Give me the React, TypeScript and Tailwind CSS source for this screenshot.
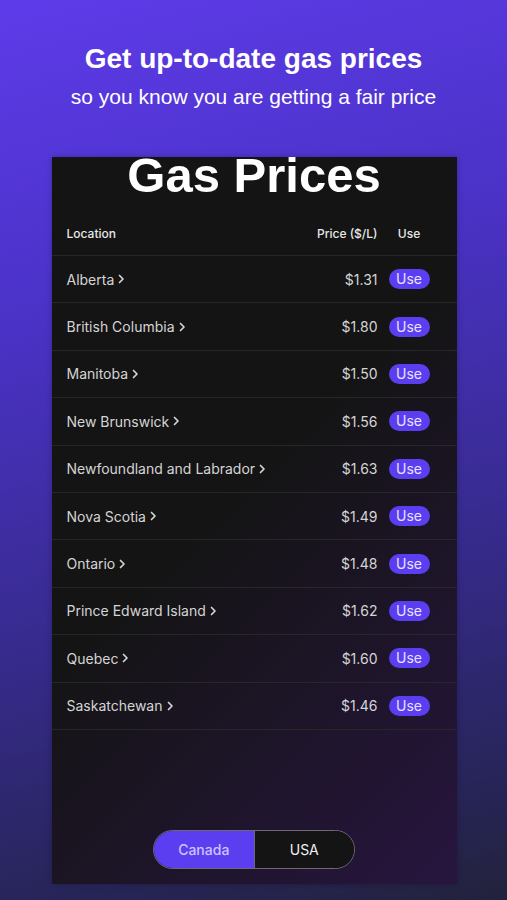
const rows = [
  { name: "Alberta", price: "$1.31" },
  { name: "British Columbia", price: "$1.80" },
  { name: "Manitoba", price: "$1.50" },
  { name: "New Brunswick", price: "$1.56" },
  { name: "Newfoundland and Labrador", price: "$1.63" },
  { name: "Nova Scotia", price: "$1.49" },
  { name: "Ontario", price: "$1.48" },
  { name: "Prince Edward Island", price: "$1.62" },
  { name: "Quebec", price: "$1.60" },
  { name: "Saskatchewan", price: "$1.46" },
];

function Chevron() {
  return (
    <svg width="7" height="10" viewBox="0 0 7 10" className="ml-[4px] inline-block" aria-hidden>
      <path d="M1.5 1.5 L5 5 L1.5 8.5" fill="none" stroke="currentColor" strokeWidth="1.7" strokeLinecap="round" strokeLinejoin="round" />
    </svg>
  );
}

function PriceRow({ name, price }: { name: string; price: string }) {
  return (
    <div className="grid h-[47.4px] grid-cols-[1fr_auto_41px] items-center gap-x-[11px] border-b border-[#272727] pl-[15px] pr-[27px] text-[14px] text-[#d4d4d4]">
      <span className="flex items-center">
        {name}
        <Chevron />
      </span>
      <span className="text-right">{price}</span>
      <span className="flex h-[20px] items-center justify-center rounded-full bg-[#5b3ef0] text-[14px] leading-none text-[#e6e2ff]">
        Use
      </span>
    </div>
  );
}

export default function App() {
  return (
    <div className="flex h-[900px] w-[507px] flex-col items-center overflow-hidden bg-[linear-gradient(165deg,#5e3be9_0%,#4a32c6_32%,#352a88_66%,#272558_88%,#22223c_100%)] font-['Liberation_Sans',Arial,sans-serif]">
      <h1 className="mt-[42px] text-[28px] font-bold leading-[34px] text-white">Get up-to-date gas prices</h1>
      <p className="mt-[8px] text-[21px] leading-[26px] text-white">so you know you are getting a fair price</p>

      <div className="mt-[47px] ml-[1px] flex h-[727px] w-[405px] flex-col overflow-hidden bg-[linear-gradient(135deg,#141414_45%,#27153f_100%)] font-['Inter',sans-serif] shadow-[0_0_6px_rgba(0,0,0,0.25)]">
        <div className="text-center font-['Liberation_Sans',Arial,sans-serif] text-[49px] font-bold leading-[36px] text-white">
          Gas Prices
        </div>
        <div className="grid h-[63px] grid-cols-[1fr_auto_41px] items-end gap-x-[11px] border-b border-[#272727] pb-[13px] pl-[15px] pr-[27px] text-[12px] font-medium leading-[16px] text-[#e8e8e8]">
          <span>Location</span>
          <span className="text-right">Price ($/L)</span>
          <span className="text-center">Use</span>
        </div>
        {rows.map((r) => (
          <PriceRow key={r.name} name={r.name} price={r.price} />
        ))}
        <div className="flex-1" />
        <div className="mb-[15px] flex h-[39px] w-[202px] self-center overflow-hidden rounded-full border-[1.5px] border-[#6c6a74] text-[14px] font-medium">
          <span className="flex flex-1 items-center justify-center border-r border-[#6c6a74] bg-[#5b3ef0] text-[#cbc4ff]">Canada</span>
          <span className="flex flex-1 items-center justify-center bg-[#141414] font-normal text-[#f0f0f0]">USA</span>
        </div>
      </div>
    </div>
  );
}
